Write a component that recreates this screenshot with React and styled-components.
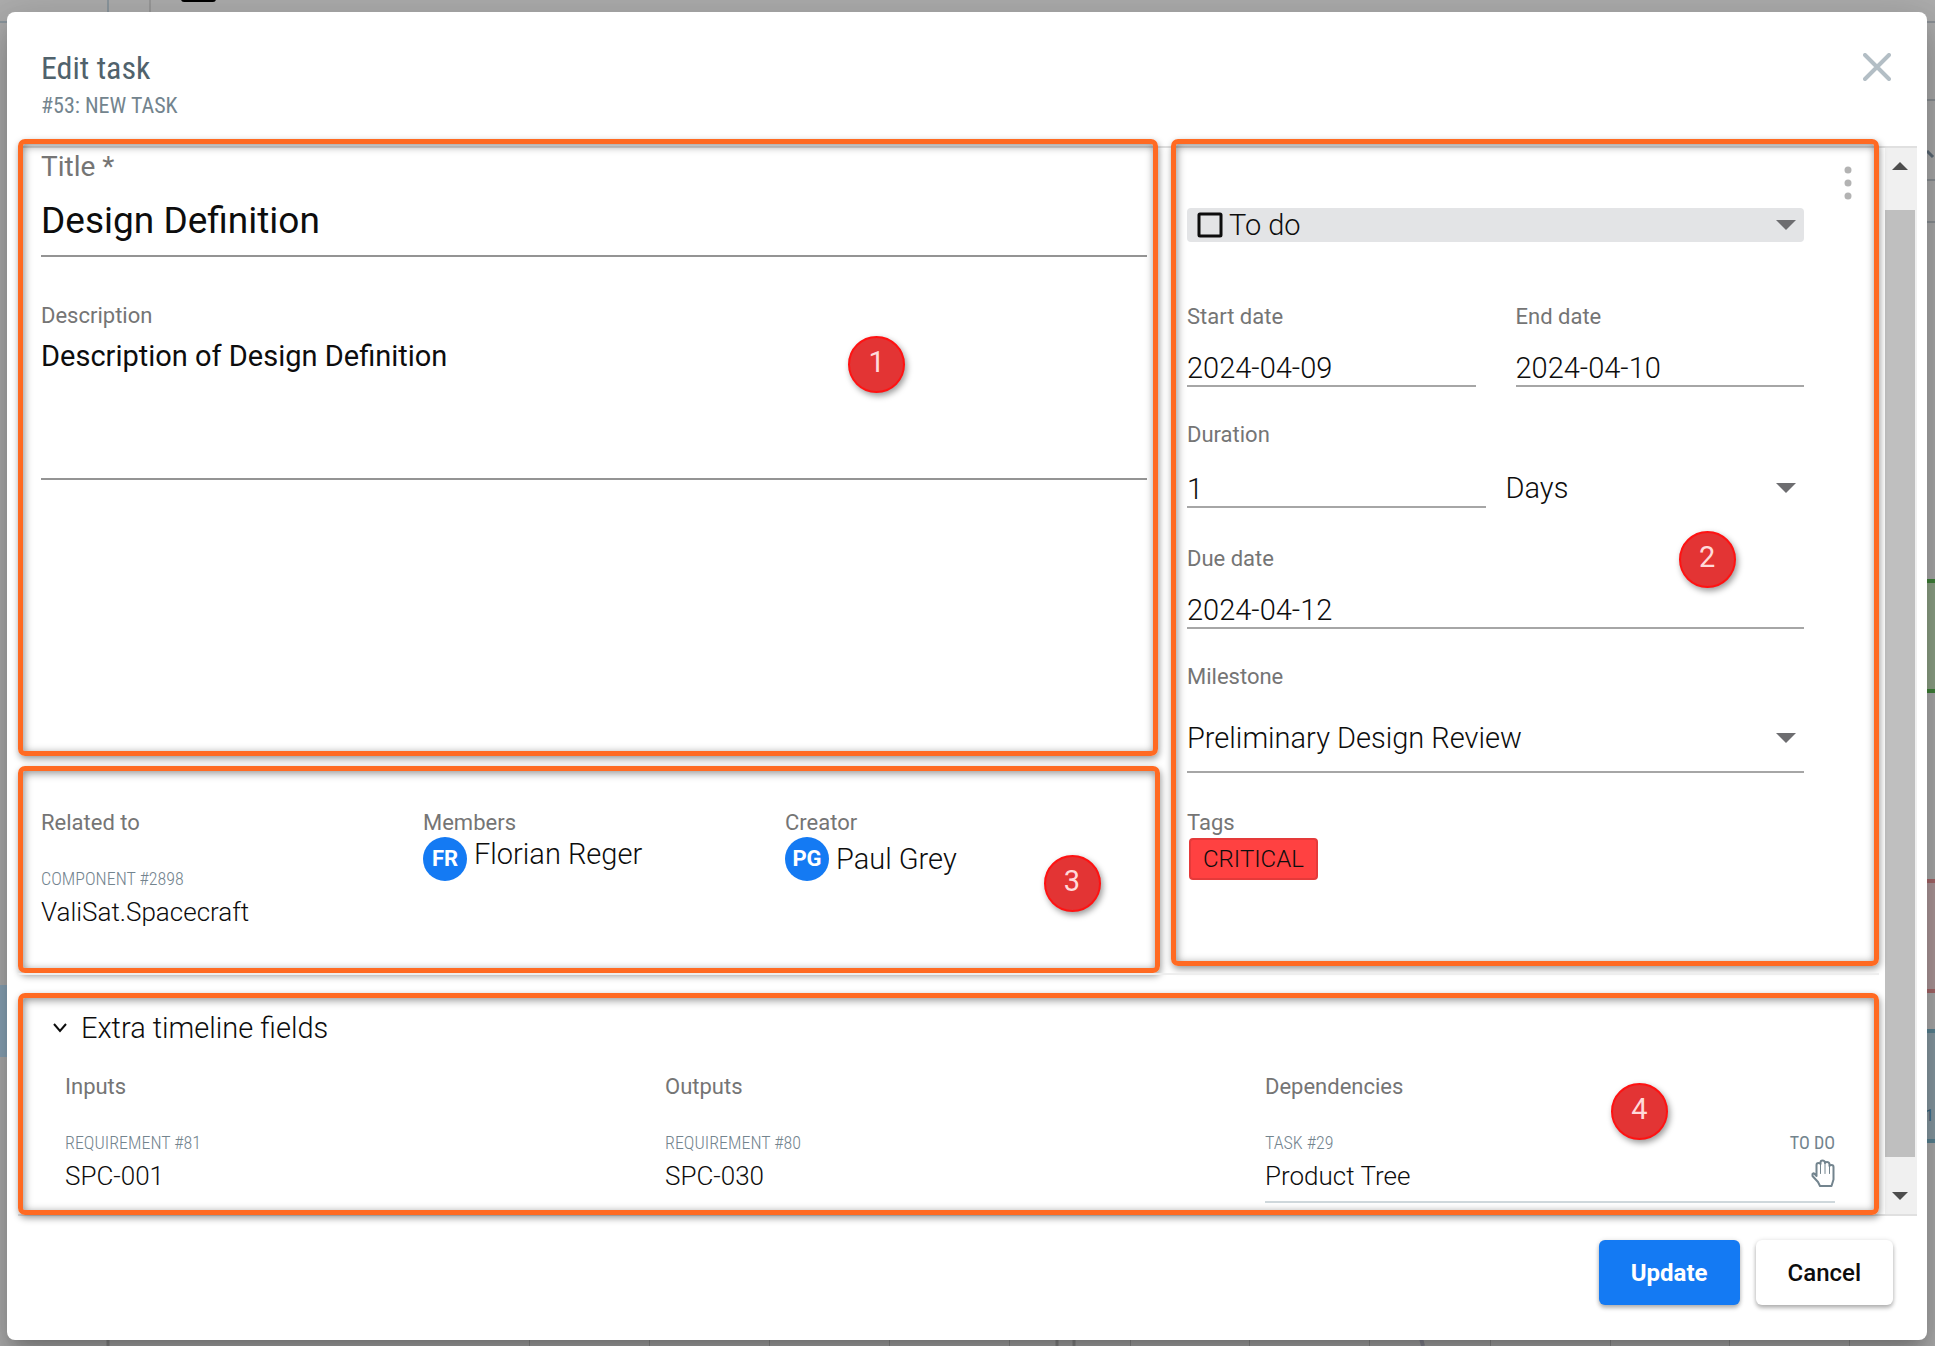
import React, { useState } from "react"
import styled, { createGlobalStyle, css } from "styled-components"

const GlobalStyle = createGlobalStyle`
  * {
    box-sizing: border-box;
  }
  body {
    margin: 0;
    background: #adadad;
    color: #0d0d0d;
    font-family: Roboto, "Liberation Sans", sans-serif;
    font-size: 29px;
    font-weight: 300;
  }
  h1, h2, p {
    margin: 0;
    font-weight: inherit;
  }
  input, select, textarea, button {
    margin: 0;
    padding: 0;
    border: 0;
    background: none;
    color: inherit;
    font: inherit;
    outline: none;
  }
  button {
    cursor: pointer;
  }
`

const condensed = css`
  font-family: "Roboto Condensed", Roboto, "Liberation Sans", sans-serif;
`

const Page = styled.div`
  position: relative;
  display: flex;
  min-height: 100vh;
  padding: 12px 8px 6px 7px;
  overflow: hidden;
`
const TimelineSvg = styled.svg`
  position: absolute;
  inset: 0;
  width: 100%;
  height: 100%;
`
const Dialog = styled.form`
  position: relative;
  display: flex;
  flex-direction: column;
  flex: 1;
  min-width: 0;
  border-radius: 8px;
  background: #fff;
  box-shadow:
    0 11px 15px -7px rgba(0, 0, 0, 0.2),
    0 24px 38px 3px rgba(0, 0, 0, 0.14),
    0 9px 46px 8px rgba(0, 0, 0, 0.12);
`
const Header = styled.header`
  display: flex;
  justify-content: space-between;
  align-items: flex-start;
  padding: 36px 36px 22px 34px;
  ${condensed}
  font-weight: 400;
  h1 {
    color: #50626c;
    font-size: 32px;
    line-height: 40px;
  }
  p {
    color: #73848e;
    font-size: 22px;
    line-height: 36px;
    text-transform: uppercase;
  }
`
const CloseButton = styled.button`
  display: flex;
  padding-top: 5px;
`
const Body = styled.div`
  display: flex;
  flex: 1;
  margin: 0 10px 0 11px;
  border-top: 2px solid #e0e0e0;
  border-bottom: 2px solid #e0e0e0;
`
const Content = styled.div`
  flex: 1;
  min-width: 0;
`
const Columns = styled.div`
  display: grid;
  grid-template-columns: minmax(0, 1142fr) minmax(0, 708fr);
  gap: 11px;
  padding-right: 6px;
`
const LeftColumn = styled.div`
  display: grid;
  grid-template-rows: 1fr auto;
  gap: 10px;
`
const Panel = styled.section`
  position: relative;
  padding: ${(p) => p.$padding};
  min-height: ${(p) => p.$minHeight || 0};
`
const Highlight = styled.div`
  position: absolute;
  inset: ${(p) => p.$inset || 0};
  border: 5px solid #ff6a22;
  border-radius: 7px;
  box-shadow:
    1px 3px 7px rgba(0, 0, 0, 0.4),
    inset 1px 2px 9px rgba(0, 0, 0, 0.45);
  pointer-events: none;
`
const Badge = styled.span`
  position: absolute;
  left: ${(p) => p.$left};
  top: ${(p) => p.$top};
  width: 57px;
  height: 57px;
  border: 2px solid #ff1212;
  border-radius: 50%;
  background: #e33434;
  box-shadow: 2px 3px 6px rgba(0, 0, 0, 0.4);
  color: #ffdada;
  font-size: 29px;
  font-weight: 400;
  line-height: 48px;
  text-align: center;
`
const Label = styled.label`
  display: block;
  color: #757575;
  font-size: ${(p) => (p.$large ? "28px" : "22px")};
  font-weight: 400;
  line-height: ${(p) => (p.$large ? "38px" : "28px")};
`
const TitleInput = styled.input`
  display: block;
  width: 100%;
  height: 71px;
  margin-bottom: 45px;
  border-bottom: 2px solid #949494;
  font-size: 37px;
  font-weight: 400;
`
const DescriptionInput = styled.textarea`
  display: block;
  width: 100%;
  height: 150px;
  padding-top: 8px;
  border-bottom: 2px solid #949494;
  font-weight: 400;
  line-height: 36px;
  resize: none;
`
const Rows = styled.div`
  display: flex;
  flex-direction: column;
  gap: 34px;
`
const Pair = styled.div`
  display: grid;
  grid-template-columns: 1fr 1fr;
  align-items: end;
  column-gap: ${(p) => p.$gap};
  padding-bottom: ${(p) => p.$bottom || 0};
`
const TextInput = styled.input`
  display: block;
  width: 100%;
  height: 36px;
  margin-top: ${(p) => p.$gap || "20px"};
  border-bottom: 2px solid #a6a6a6;
`
const SelectBox = styled.div`
  position: relative;
  display: flex;
  align-items: center;
  height: 34px;
  select {
    flex: 1;
    min-width: 0;
    height: 100%;
    appearance: none;
  }
  &::after {
    content: "";
    position: absolute;
    right: 8px;
    border: 10px solid transparent;
    border-top-color: #6d6d70;
    border-bottom: 0;
    pointer-events: none;
  }
`
const StatusSelect = styled(SelectBox)`
  gap: 6px;
  margin-bottom: 27px;
  padding-left: 10px;
  border-radius: 4px;
  background: #e3e4e6;
`
const DaysSelect = styled(SelectBox)`
  height: 40px;
`
const MilestoneSelect = styled(SelectBox)`
  height: 68px;
  margin-top: 14px;
  border-bottom: 2px solid #a6a6a6;
`
const Tags = styled.div`
  padding-top: 2px;
`
const Tag = styled.span`
  display: inline-block;
  margin: 1px 2px;
  padding: 0 12px;
  border: 2px solid #e53a3a;
  border-radius: 4px;
  background: #ff4141;
  font-size: 24px;
  line-height: 38px;
  vertical-align: top;
`
const MenuButton = styled.button`
  position: absolute;
  top: 18px;
  right: 27px;
  display: flex;
`
const People = styled.div`
  display: grid;
  grid-template-columns: 382fr 362fr 362fr;
`
const Person = styled.div`
  display: flex;
  align-items: ${(p) => p.$align || "center"};
  gap: 7px;
  line-height: 34px;
`
const Avatar = styled.span`
  width: 44px;
  height: 44px;
  border-radius: 50%;
  background: #147af3;
  color: #fff;
  font-size: 22px;
  font-weight: 700;
  line-height: 43px;
  text-align: center;
`
const Item = styled.div`
  display: grid;
  grid-template-columns: 1fr auto;
  margin-top: 30px;
  padding-bottom: 4px;
  ${(p) => p.$line && "border-bottom: 2px solid #cfd8dc;"}
  svg {
    justify-self: end;
    margin-top: 4px;
  }
`
const ItemType = styled.span`
  ${condensed}
  color: #73848e;
  font-size: 18px;
  font-weight: ${(p) => p.$weight || 300};
  line-height: 24px;
  text-align: right;
  text-transform: uppercase;
  &:first-child {
    text-align: left;
  }
`
const ItemName = styled.span`
  font-size: 26px;
  line-height: 42px;
`
const Extra = styled.section`
  position: relative;
  margin-right: 6px;
  padding: 33px 44px 10px 35px;
  border-top: 2px solid #eee;
`
const Toggle = styled.button`
  display: flex;
  align-items: center;
  gap: 14px;
  height: 40px;
`
const ExtraGrid = styled.div`
  display: grid;
  grid-template-columns: repeat(3, minmax(0, 1fr));
  gap: 30px;
  padding: 25px 0 0 12px;
`
const Scrollbar = styled.div`
  display: flex;
  flex-direction: column;
  align-items: center;
  width: 32px;
  padding: 14px 2px 14px 0;
  background: #f0f0f0;
`
const Thumb = styled.div`
  flex: 1;
  width: 100%;
  margin: 40px 0 35px;
  background: #bfbfbf;
`
const Arrow = styled.span`
  border: 8px solid transparent;
  ${(p) =>
    p.$up
      ? "border-bottom-color: #4d4d4d; border-top: 0;"
      : "border-top-color: #4d4d4d; border-bottom: 0;"}
`
const Footer = styled.footer`
  display: flex;
  justify-content: flex-end;
  gap: 16px;
  padding: 24px 34px 35px;
`
const Button = styled.button`
  height: 65px;
  padding: 0 32px;
  border-radius: 6px;
  background: ${(p) => (p.$primary ? "#147af3" : "#fff")};
  color: ${(p) => (p.$primary ? "#fff" : "#0d0d0d")};
  box-shadow:
    0 3px 4px rgba(0, 0, 0, 0.28),
    0 0 5px rgba(0, 0, 0, 0.1);
  font-size: 24px;
  font-weight: ${(p) => (p.$primary ? 700 : 500)};
`

const gridLines = [529, 649, 769, 889, 1009, 1130, 1249, 1369, 1490, 1610, 1729, 1849]

const Timeline = () => (
  <TimelineSvg aria-hidden="true">
    <rect x="181" y="-10" width="35" height="12" rx="3" fill="#000" />
    <path d="M108 0V12M0 22H8" stroke="#8c979e" strokeWidth="2" />
    <path d="M150 0V12" stroke="#999" strokeWidth="2" />
    <rect y="985" width="8" height="72" fill="#8aa5b8" />
    <path d="M108 1338V1346M1057 1338V1346M1074 1338V1346" stroke="#8b8b8b" strokeWidth="3" />
    <path d="M1421 1338L1423 1346" stroke="#8b8b98" strokeWidth="4" />
    {gridLines.map((x) => (
      <rect key={x} x={x} y="1338" width="1" height="8" fill="#919191" />
    ))}
    <svg x="100%" overflow="visible">
      <path d="M-10 22H0M-10 100H0M-10 180H0M-10 222H0" stroke="#8c9196" strokeWidth="2" />
      <path d="M-8 151L-2 157" stroke="#5d6b77" strokeWidth="3" />
      <rect x="-10" y="581" width="20" height="110" fill="#90a589" stroke="#41843b" strokeWidth="4" />
      <rect x="-10" y="881" width="20" height="110" fill="#b09a9c" stroke="#a9696b" strokeWidth="4" />
      <rect x="-10" y="1031" width="20" height="110" fill="#8a9ca5" stroke="#5b8595" strokeWidth="4" />
      <text x="-1" y="1121" textAnchor="end" fill="#3d6b85" fontSize="16" fontWeight="400">1</text>
    </svg>
  </TimelineSvg>
)

const HandIcon = () => (
  <svg width="24" height="28" viewBox="0 0 24 28" fill="none" stroke="#73848e" strokeWidth="2" strokeLinejoin="round" strokeLinecap="round">
    <path d="M5.500 17V6q0-2 2-2t2 1V3.500q0-2 2-2t2.500 2V4q0-1 2-1t2.500 2v2q0-1 2-1t2 2V20.500L20.500 27H9L7 23 1.500 17V15q1-2 4 2" />
    <path d="M9.500 5V14.500M14 4V14.500M18.500 6V14.500" strokeWidth="1" />
  </svg>
)

const LinkedItem = ({ type, name, status, line }) => (
  <Item $line={line}>
    <ItemType>{type}</ItemType>
    {status ? <ItemType $weight={400}>{status}</ItemType> : <span />}
    <ItemName>{name}</ItemName>
    {status && <HandIcon />}
  </Item>
)

const App = () => {
  const [title, setTitle] = useState("Design Definition")
  const [description, setDescription] = useState("Description of Design Definition")
  const [open, setOpen] = useState(true)

  return (
    <>
      <GlobalStyle />
      <Page>
        <Timeline />
        <Dialog onSubmit={(e) => e.preventDefault()}>
          <Header>
            <div>
              <h1>Edit task</h1>
              <p>#53: New task</p>
            </div>
            <CloseButton type="button" aria-label="Close">
              <svg width="28" height="28" viewBox="0 0 28 28" stroke="#b3bec5" strokeWidth="4" strokeLinecap="round">
                <path d="M2 2L26 26M26 2L2 26" />
              </svg>
            </CloseButton>
          </Header>

          <Body>
            <Content>
              <Columns>
                <LeftColumn>
                  <Panel $padding="0 13px 0 23px" $minHeight="608px">
                    <Label $large htmlFor="title">Title *</Label>
                    <TitleInput id="title" value={title} onChange={(e) => setTitle(e.target.value)} />
                    <Label htmlFor="description">Description</Label>
                    <DescriptionInput
                      id="description"
                      value={description}
                      onChange={(e) => setDescription(e.target.value)}
                    />
                    <Highlight $inset="-9px 2px 0 0" />
                    <Badge $left="72.7%" $top="188px">1</Badge>
                  </Panel>

                  <Panel $padding="43px 13px 0 23px" $minHeight="207px">
                    <People>
                      <div>
                        <Label as="p">Related to</Label>
                        <LinkedItem type="Component #2898" name="ValiSat.Spacecraft" />
                      </div>
                      <div>
                        <Label as="p">Members</Label>
                        <Person $align="flex-start">
                          <Avatar>FR</Avatar>
                          Florian Reger
                        </Person>
                      </div>
                      <div>
                        <Label as="p">Creator</Label>
                        <Person>
                          <Avatar>PG</Avatar>
                          Paul Grey
                        </Person>
                      </div>
                    </People>
                    <Highlight />
                    <Badge $left="89.8%" $top="89px">3</Badge>
                  </Panel>
                </LeftColumn>

                <Panel $padding="60px 75px 0 16px">
                  <Rows>
                    <StatusSelect>
                      <svg width="26" height="26" viewBox="0 0 26 26" fill="none" stroke="#0d0d0d" strokeWidth="3">
                        <rect x="2" y="2" width="22" height="22" rx="1" />
                      </svg>
                      <select aria-label="Status" defaultValue="To do">
                        <option>To do</option>
                        <option>Done</option>
                      </select>
                    </StatusSelect>
                    <Pair $gap="40px">
                      <div>
                        <Label htmlFor="start">Start date</Label>
                        <TextInput id="start" defaultValue="2024-04-09" />
                      </div>
                      <div>
                        <Label htmlFor="end">End date</Label>
                        <TextInput id="end" defaultValue="2024-04-10" />
                      </div>
                    </Pair>
                    <Pair $gap="20px" $bottom="3px">
                      <div>
                        <Label htmlFor="duration">Duration</Label>
                        <TextInput id="duration" $gap="23px" defaultValue="1" />
                      </div>
                      <DaysSelect>
                        <select aria-label="Duration unit" defaultValue="Days">
                          <option>Days</option>
                          <option>Weeks</option>
                        </select>
                      </DaysSelect>
                    </Pair>
                    <div>
                      <Label htmlFor="due">Due date</Label>
                      <TextInput id="due" defaultValue="2024-04-12" />
                    </div>
                    <div>
                      <Label htmlFor="milestone">Milestone</Label>
                      <MilestoneSelect>
                        <select id="milestone" defaultValue="Preliminary Design Review">
                          <option>Preliminary Design Review</option>
                        </select>
                      </MilestoneSelect>
                    </div>
                    <Tags>
                      <Label as="p">Tags</Label>
                      <Tag>CRITICAL</Tag>
                    </Tags>
                  </Rows>
                  <MenuButton type="button" aria-label="More actions">
                    <svg width="8" height="34" viewBox="0 0 8 34" fill="#b3b3b3">
                      <circle cx="4" cy="4" r="3.500" />
                      <circle cx="4" cy="17" r="3.500" />
                      <circle cx="4" cy="30" r="3.500" />
                    </svg>
                  </MenuButton>
                  <Highlight $inset="-9px 0 7px 0" />
                  <Badge $left="71.7%" $top="383px">2</Badge>
                </Panel>
              </Columns>

              <Extra>
                <Toggle type="button" aria-expanded={open} onClick={() => setOpen(!open)}>
                  <svg width="14" height="10" viewBox="0 0 14 10" fill="none" stroke="#0d0d0d" strokeWidth="2">
                    <path d="M1 1L7 8L13 1" />
                  </svg>
                  Extra timeline fields
                </Toggle>
                {open && (
                  <ExtraGrid>
                    <div>
                      <Label as="p">Inputs</Label>
                      <LinkedItem type="Requirement #81" name="SPC-001" />
                    </div>
                    <div>
                      <Label as="p">Outputs</Label>
                      <LinkedItem type="Requirement #80" name="SPC-030" />
                    </div>
                    <div>
                      <Label as="p">Dependencies</Label>
                      <LinkedItem type="Task #29" name="Product Tree" status="To do" line />
                    </div>
                  </ExtraGrid>
                )}
                <Highlight $inset="18px 0 -2px 0" />
                <Badge $left="85.6%" $top="108px">4</Badge>
              </Extra>
            </Content>
            <Scrollbar aria-hidden="true">
              <Arrow $up />
              <Thumb />
              <Arrow />
            </Scrollbar>
          </Body>

          <Footer>
            <Button type="submit" $primary>Update</Button>
            <Button type="button">Cancel</Button>
          </Footer>
        </Dialog>
      </Page>
    </>
  )
}

export default App
